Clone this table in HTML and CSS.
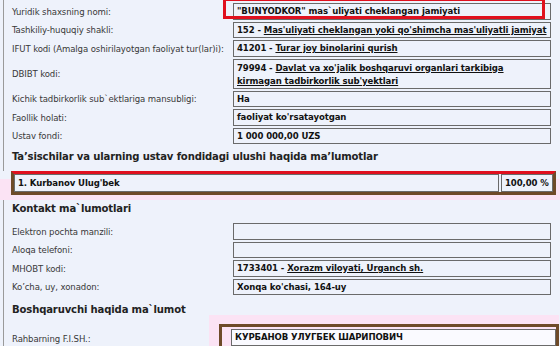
FILE: index.html
```html
<!DOCTYPE html>
<html>
<head>
<meta charset="utf-8">
<link rel="stylesheet" href="styles.css">
</head>
<body>
<div class="page">
  <div class="rows">
    <div class="row">
      <div class="label">Yuridik shaxsning nomi:</div>
      <div class="value">"BUNYODKOR" mas`uliyati cheklangan jamiyati</div>
    </div>
    <div class="row">
      <div class="label">Tashkiliy-huquqiy shakli:</div>
      <div class="value">152 - <u>Mas'uliyati cheklangan yoki qo'shimcha mas'uliyatli jamiyat</u></div>
    </div>
    <div class="row">
      <div class="label">IFUT kodi (Amalga oshirilayotgan faoliyat tur(lar)i):</div>
      <div class="value">41201 - <u>Turar joy binolarini qurish</u></div>
    </div>
    <div class="row">
      <div class="label">DBIBT kodi:</div>
      <div class="value value-2l">79994 - <u>Davlat va xo'jalik boshqaruvi organlari tarkibiga<br>kirmagan tadbirkorlik sub'yektlari</u></div>
    </div>
    <div class="row">
      <div class="label">Kichik tadbirkorlik sub`ektlariga mansubligi:</div>
      <div class="value">Ha</div>
    </div>
    <div class="row">
      <div class="label">Faollik holati:</div>
      <div class="value">faoliyat ko'rsatayotgan</div>
    </div>
    <div class="row">
      <div class="label">Ustav fondi:</div>
      <div class="value">1 000 000,00 UZS</div>
    </div>
  </div>
  <div class="mark-red"></div>

  <h2 class="heading">Ta’sischilar va ularning ustav fondidagi ulushi haqida ma’lumotlar</h2>

  <div class="founder-band">
    <div class="founder">
      <div class="fname">1. Kurbanov Ulug'bek</div>
      <div class="fpct">100,00 %</div>
    </div>
  </div>

  <h2 class="heading heading-contact">Kontakt ma`lumotlari</h2>

  <div class="rows rows-contact">
    <div class="row">
      <div class="label">Elektron pochta manzili:</div>
      <div class="value"></div>
    </div>
    <div class="row">
      <div class="label">Aloqa telefoni:</div>
      <div class="value"></div>
    </div>
    <div class="row">
      <div class="label">MHOBT kodi:</div>
      <div class="value">1733401 - <u>Xorazm viloyati, Urganch sh.</u></div>
    </div>
    <div class="row">
      <div class="label">Ko’cha, uy, xonadon:</div>
      <div class="value">Xonqa ko'chasi, 164-uy</div>
    </div>
  </div>

  <h2 class="heading heading-boss">Boshqaruvchi haqida ma`lumot</h2>

  <div class="row row-boss">
    <div class="label">Rahbarning F.I.SH.:</div>
    <div class="boss-band">
      <div class="boss-frame">
        <div class="value value-white">КУРБАНОВ УЛУГБЕК ШАРИПОВИЧ</div>
      </div>
    </div>
  </div>
</div>
</body>
</html>
```

FILE: styles.css
```css
html, body {
  margin: 0;
  padding: 0;
  background: #eef2fb;
  overflow: hidden;
}
body {
  font-family: "DejaVu Sans Condensed", "DejaVu Sans", sans-serif;
  font-size: 9.5px;
  color: #2a2a2a;
}
.page {
  position: relative;
  margin-left: 3px;
  border-left: 1px solid #9a9a9a;
  min-height: 346px;
  padding-top: 3px;
}
.rows {
  display: flex;
  flex-direction: column;
  gap: 2px;
}
.row {
  display: grid;
  grid-template-columns: 229px 318px;
  align-items: center;
}
.label {
  padding-left: 8px;
  color: #383838;
  letter-spacing: -0.1px;
  white-space: nowrap;
}
.value {
  border: 1px solid #6a6a6a;
  padding: 1px 3px;
  line-height: 12.5px;
  min-height: 12.5px;
  font-weight: bold;
  color: #111;
  letter-spacing: -0.1px;
  white-space: nowrap;
}
.value-2l {
  line-height: 13px;
}
.value u {
  text-decoration-thickness: 1px;
  text-underline-offset: 1px;
}
.mark-red {
  position: absolute;
  left: 219px;
  top: -2px;
  width: 316px;
  height: 15px;
  border: 3px solid #e0101e;
}
.heading {
  margin: 4px 0 5px 8px;
  font-size: 11.2px;
  line-height: 18px;
  font-weight: bold;
  color: #222;
  letter-spacing: -0.15px;
  font-family: "DejaVu Sans Condensed", "DejaVu Sans", sans-serif;
}
.heading-contact {
  margin-top: 0;
}
.heading-boss {
  margin-top: 6px;
  margin-bottom: 0;
}
.founder-band {
  padding: 0 4px 5px 11px;
  margin-left: -4px;
  background: linear-gradient(to bottom, #eef2fb 0, #eef2fb 8px, #fbe3f4 8px);
}
.founder {
  display: flex;
  gap: 2px;
  border: 3px solid #6e4a28;
  border-top-color: #e0101e;
  background: #eef2fb;
}
.fname, .fpct {
  border: 1px solid #6a6a6a;
  padding: 1px 3px;
  line-height: 14px;
  font-weight: bold;
  color: #111;
  letter-spacing: -0.1px;
  white-space: nowrap;
}
.fname {
  flex: 1;
}
.fpct {
  width: 44px;
  flex: none;
}
.rows-contact {
  margin-top: 4px;
}
.row-boss {
  align-items: end;
  margin-top: -4px;
}
.row-boss .label {
  padding-bottom: 6px;
}
.boss-band {
  margin-left: -24px;
  margin-right: -8px;
  background: #fbe3f4;
  padding: 9px 0 0 10px;
}
.boss-frame {
  border: 3px solid #6e4a28;
  border-bottom: none;
  padding: 2px 0 4px 9px;
}
.value-white {
  background: #fafaff;
}
```
